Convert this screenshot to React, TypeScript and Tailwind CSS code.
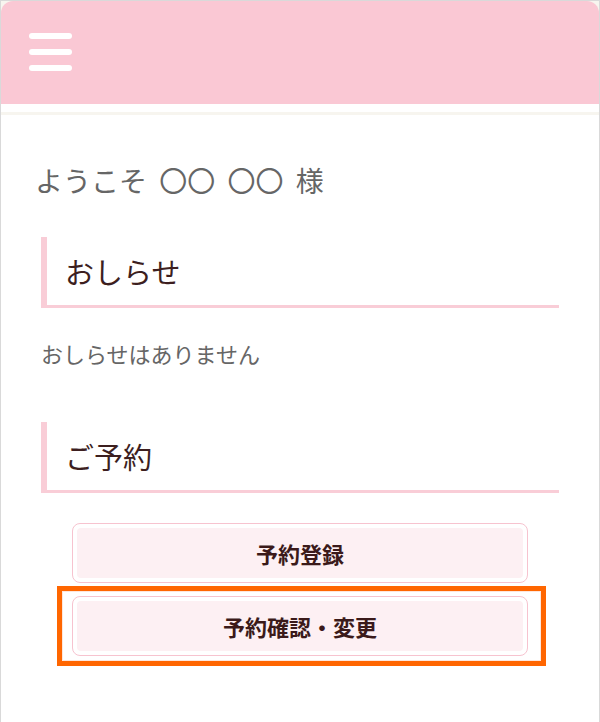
import React from 'react';

const font = { fontFamily: '"Noto Sans CJK JP", "Noto Sans", sans-serif' };

const SectionTitle: React.FC<{ title: string }> = ({ title }) => (
  <div className="flex h-[71px] items-center border-b-[3px] border-l-[6px] border-[#f9cdd7] pl-[18px]">
    <h2 className="text-[29px] leading-none text-[#3d1f1f]">{title}</h2>
  </div>
);

const MenuButton: React.FC<{ label: string }> = ({ label }) => (
  <button className="block h-[60px] w-full rounded-[8px] border border-[#f7c3cf] bg-white p-[4px]">
    <div className="flex h-full items-center justify-center rounded-[4px] bg-[#fdf0f3] text-[22px] font-bold text-[#3b1a1a]">
      {label}
    </div>
  </button>
);

export default function App() {
  return (
    <div
      style={font}
      className="flex min-h-[722px] w-[600px] flex-col border-x border-t border-[#d9d9d9] bg-[#f7f5ef]"
    >
      {/* header */}
      <header className="h-[103px] rounded-t-[12px] bg-[#fac8d4] pl-[28px] pt-[32px]">
        <div className="flex w-[43px] flex-col gap-[10px]">
          <span className="block h-[6px] rounded-full bg-white" />
          <span className="block h-[6px] rounded-full bg-white" />
          <span className="block h-[6px] rounded-full bg-white" />
        </div>
      </header>
      <div className="h-[8px] bg-white" />
      <div className="h-[3px] bg-[#f7f5ef]" />

      <main className="flex-1 bg-white px-[40px] pt-[45px]">
        <p className="-ml-[6px] h-[40px] text-[28px] leading-[40px] text-[#666666] [word-spacing:6px]">
          ようこそ 〇〇 〇〇 様
        </p>

        <div className="mt-[37px]">
          <SectionTitle title="おしらせ" />
        </div>
        <p className="mt-[30px] text-[22px] leading-[30px] text-[#666666]">おしらせはありません</p>

        <div className="mt-[54px]">
          <SectionTitle title="ご予約" />
        </div>

        <div className="mx-[31px] mt-[30px]">
          <MenuButton label="予約登録" />
          <div className="-ml-[15px] -mr-[18px] mt-[3px] border-[5px] border-[#ff6600] pb-[5px] pl-[10px] pr-[13px] pt-[5px] shadow-[inset_0_0_0_1px_#fde6dc]">
            <MenuButton label="予約確認・変更" />
          </div>
        </div>
      </main>
    </div>
  );
}
